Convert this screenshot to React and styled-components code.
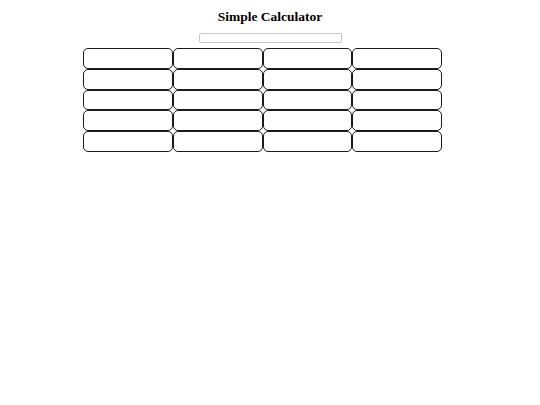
import React from "react";
import styled, { createGlobalStyle } from "styled-components";

const GlobalStyle = createGlobalStyle`
  body {
    margin: 0;
    background: #ffffff;
    font-family: "Liberation Serif", "Times New Roman", serif;
  }
`;

const Page = styled.div`
  width: 540px;
  padding-top: 9px;
`;

const Title = styled.h2`
  margin: 0;
  text-align: center;
  font-size: 13.5px;
  font-weight: 700;
  line-height: 15px;
  color: #000;
`;

const Display = styled.input`
  display: block;
  box-sizing: border-box;
  width: 143px;
  height: 10px;
  margin: 9px auto 0;
  padding: 0;
  border: 1px solid #c8c8c8;
  border-radius: 2px;
  background: #fff;
  outline: none;
`;

const Keys = styled.div`
  display: grid;
  grid-template-columns: repeat(4, 1fr);
  grid-auto-rows: 20.8px;
  width: 359px;
  margin: 5px 0 0 83px;
`;

const Key = styled.button`
  box-sizing: border-box;
  margin: 0;
  padding: 0;
  background: #fff;
  border: 1px solid #1a1a1a;
  border-radius: 5px;
  font-family: "Liberation Sans", Arial, sans-serif;
  font-size: 10px;
  cursor: pointer;
`;

const keys = Array.from({ length: 20 }, (_, i) => i);

const App = () => {
  return (
    <Page>
      <GlobalStyle />
      <Title>Simple Calculator</Title>
      <Display type="text" readOnly />
      <Keys>
        {keys.map((k) => (
          <Key key={k} type="button" />
        ))}
      </Keys>
    </Page>
  );
};

export default App;
